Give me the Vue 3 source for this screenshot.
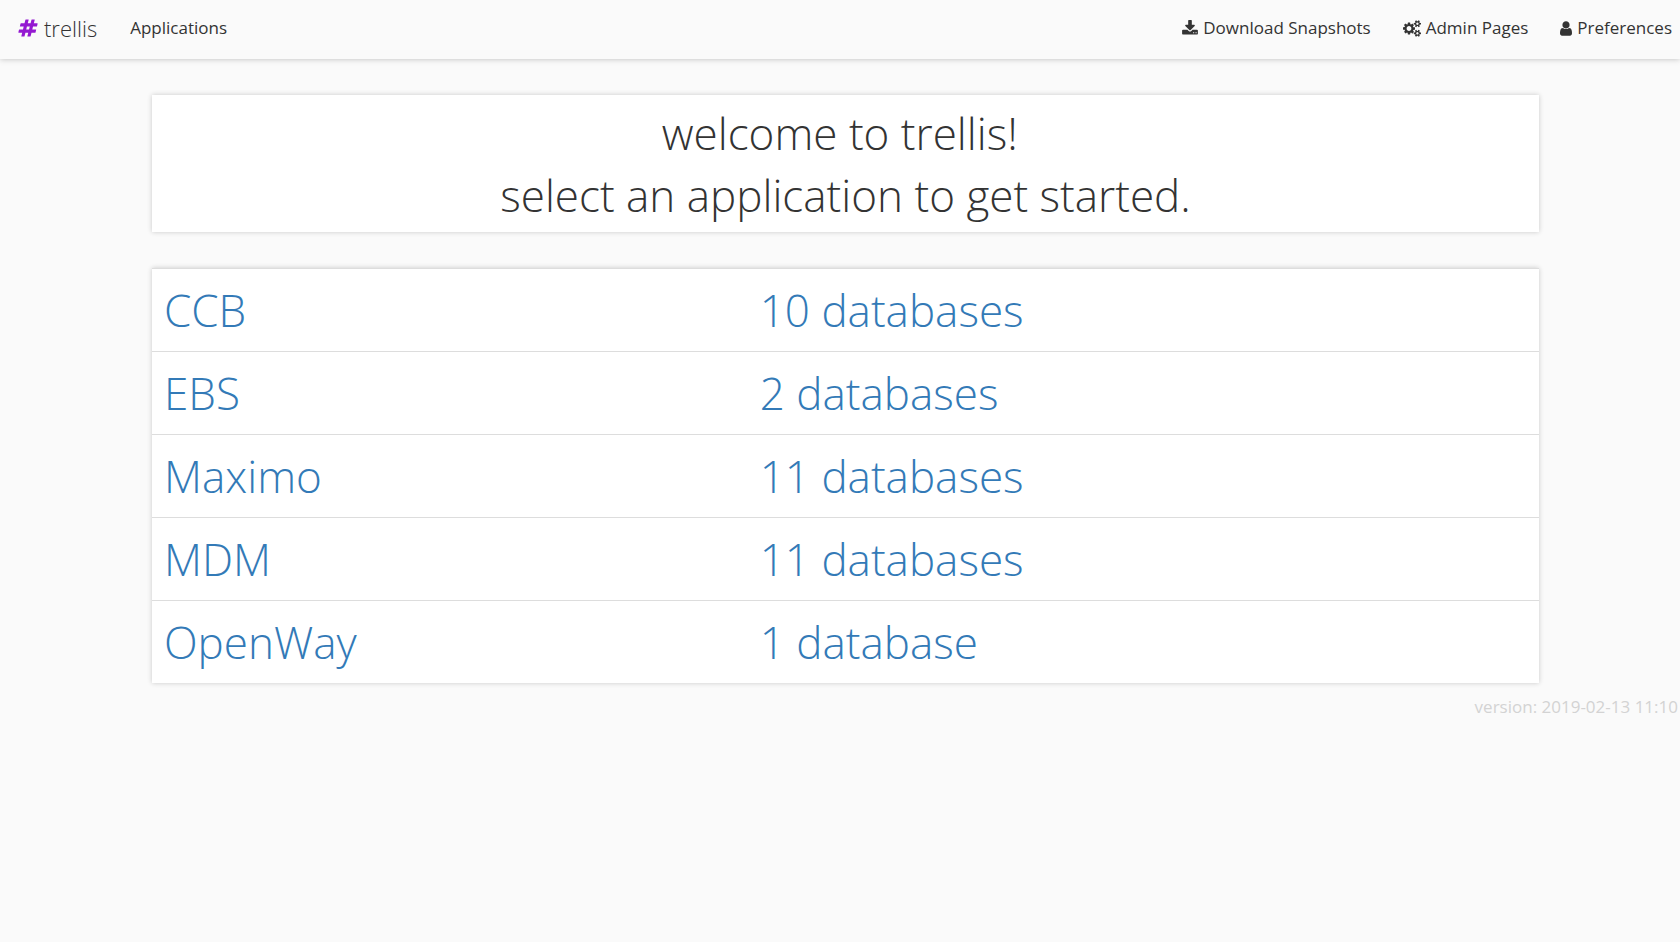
<script setup>
const applications = [
  { name: 'CCB', count: 10 },
  { name: 'EBS', count: 2 },
  { name: 'Maximo', count: 11 },
  { name: 'MDM', count: 11 },
  { name: 'OpenWay', count: 1 },
]

const label = (count) => `${count} ${count === 1 ? 'database' : 'databases'}`
const smallGear = 'v140q0 16-149 31-12 27-30 52 51 113 51 138 0 4-4 7-122 71-124 71-8 0-46-47t-52-68q-20 2-30 2t-30-2q-14 21-52 68t-46 47q-2 0-124-71-4-3-4-7 0-25 51-138-18-25-30-52-149-15-149-31v-140q0-16 149-31 13-29 30-52-51-113-51-138 0-4 4-7 4-2 35-20t59-34 30-16q8 0 46 46.5t52 67.5q20-2 30-2t30 2q51-71 92-112l6-2q4 0 124 70 4 3 4 7 0 25-51 138 17 23 30 52 149 15 149 31z'
const tools = [
  {
    text: 'Download Snapshots',
    box: '64 0 1664 1792',
    width: 16,
    path: 'M1344 1344q0-26-19-45t-45-19-45 19-19 45 19 45 45 19 45-19 19-45zm256 0q0-26-19-45t-45-19-45 19-19 45 19 45 45 19 45-19 19-45zm128-224v320q0 40-28 68t-68 28h-1472q-40 0-68-28t-28-68v-320q0-40 28-68t68-28h465l135 136q58 56 136 56t136-56l136-136h464q40 0 68 28t28 68zm-325-569q17 41-14 70l-448 448q-18 19-45 19t-45-19l-448-448q-31-29-14-70 17-39 59-39h256v-448q0-26 19-45t45-19h256q26 0 45 19t19 45v448h256q42 0 59 39z',
  },
  {
    text: 'Admin Pages',
    box: '0 0 1920 1792',
    width: 18,
    path: 'M896 896q0-106-75-181t-181-75-181 75-75 181 75 181 181 75 181-75 75-181zm768 512q0-52-38-90t-90-38-90 38-38 90q0 53 37.5 90.5t90.5 37.5 90.5-37.5 37.5-90.5zm0-1024q0-52-38-90t-90-38-90 38-38 90q0 53 37.5 90.5t90.5 37.5 90.5-37.5 37.5-90.5zm-384 421v185q0 10-7 19.5t-16 10.5l-155 24q-11 35-32 76 34 48 90 115 7 11 7 20 0 12-7 19-23 30-82.5 89.5t-78.5 59.5q-11 0-21-7l-115-90q-37 19-77 31-11 108-23 155-7 24-30 24h-186q-11 0-20-7.5t-10-17.5l-23-153q-34-10-75-31l-118 89q-7 7-20 7-11 0-21-8-144-133-144-160 0-9 7-19 10-14 41-53t47-61q-23-44-35-82l-152-24q-10-1-17-9.5t-7-19.5v-185q0-10 7-19.5t16-10.5l155-24q11-35 32-76-34-48-90-115-7-11-7-20 0-12 7-20 22-30 82-89t79-59q11 0 21 7l115 90q34-18 77-32 11-108 23-154 7-24 30-24h186q11 0 20 7.5t10 17.5l23 153q34 10 75 31l118-89q8-7 20-7 11 0 21 8 144 133 144 160 0 8-7 19-12 16-42 54t-45 60q23 48 34 82l152 23q10 2 17 10.5t7 19.5zm640 533' + smallGear + 'm0-1024' + smallGear,
  },
  {
    text: 'Preferences',
    box: '256 0 1280 1792',
    width: 12,
    path: 'M1536 1399q0 109-62.5 187t-150.5 78h-854q-88 0-150.5-78t-62.5-187q0-85 8.5-160.5t31.5-152 58.5-131 94-89 134.5-34.5q131 128 313 128t313-128q76 0 134.5 34.5t94 89 58.5 131 31.5 152 8.5 160.5zm-256-887q0 159-112.5 271.5t-271.5 112.5-271.5-112.5-112.5-271.5 112.5-271.5 271.5-112.5 271.5 112.5 112.5 271.5z',
  },
]
</script>

<template>
  <header class="navbar">
    <a class="brand" href="#">
      <svg class="hash" viewBox="0 0 1792 1792" aria-hidden="true">
        <path d="M991 1024l64-256h-254l-64 256h254zm768-504l-56 224q-7 24-31 24h-327l-64 256h311q15 0 25 12 10 14 6 28l-56 224q-5 24-31 24h-327l-81 328q-7 24-31 24h-224q-16 0-26-12-9-12-6-28l78-312h-254l-81 328q-7 24-31 24h-225q-15 0-25-12-9-12-6-28l78-312h-311q-15 0-25-12-9-12-6-28l56-224q7-24 31-24h327l64-256h-311q-15 0-25-12-10-14-6-28l56-224q5-24 31-24h327l81-328q7-24 32-24h224q15 0 25 12 9 12 6 28l-78 312h254l81-328q7-24 32-24h224q15 0 25 12 9 12 6 28l-78 312h311q15 0 25 12 9 12 6 28z" />
      </svg>
      <span>trellis</span>
    </a>
    <nav class="links">
      <a href="#applications">Applications</a>
    </nav>
    <nav class="links tools">
      <a v-for="tool in tools" :key="tool.text" href="#">
        <svg :viewBox="tool.box" :width="tool.width" height="17" aria-hidden="true">
          <path :d="tool.path" />
        </svg>
        <span>{{ tool.text }}</span>
      </a>
    </nav>
  </header>

  <main class="content">
    <h1 class="card welcome">welcome to trellis!&nbsp;<br>select an application to get started.</h1>
    <table id="applications" class="card apps">
      <tbody>
        <tr v-for="app in applications" :key="app.name">
          <td><a href="#">{{ app.name }}</a></td>
          <td><a href="#">{{ label(app.count) }}</a></td>
        </tr>
      </tbody>
    </table>
  </main>

  <footer class="version">version: 2019-02-13 11:10</footer>
</template>

<style>
body {
  background: #fafafa;
  color: #333;
  font-family: "Open Sans", sans-serif;
  font-size: 17px;
}
</style>

<style scoped>
a {
  text-decoration: none;
}

.navbar {
  display: flex;
  align-items: center;
  box-sizing: border-box;
  height: 59px;
  padding: 0 8px 3px 18px;
  box-shadow: 0 0 6px rgba(0, 0, 0, 0.25);
}

.brand {
  display: flex;
  align-items: center;
  gap: 6px;
  color: #333;
  font-size: 22px;
  font-weight: 300;
}

.hash {
  width: 20px;
  height: 22px;
  fill: #9419d1;
}

.links {
  display: flex;
  gap: 32px;
  margin-left: 33px;
}

.links a {
  display: flex;
  align-items: center;
  gap: 5px;
  color: #333;
  line-height: 24px;
}

.links svg {
  fill: #333;
}

.tools {
  margin-left: auto;
}

.content {
  margin: 36px 141px 0 152px;
}

.card {
  box-sizing: border-box;
  width: 100%;
  margin: 0 0 36px;
  background: #fff;
  box-shadow: 0 0 5px rgba(0, 0, 0, 0.2);
  font-size: 44px;
  font-weight: 300;
}

.welcome {
  padding: 7px 0 6px;
  line-height: 62px;
  text-align: center;
}

.apps {
  border-collapse: collapse;
  margin-bottom: 12px;
}

.apps td {
  height: 64px;
  padding: 9px 12px;
  border-top: 1px solid #ddd;
  line-height: 64px;
}

.apps a {
  color: #337ab7;
}

.version {
  padding-right: 2px;
  color: #d3d3d3;
  line-height: 24px;
  text-align: right;
}
</style>
